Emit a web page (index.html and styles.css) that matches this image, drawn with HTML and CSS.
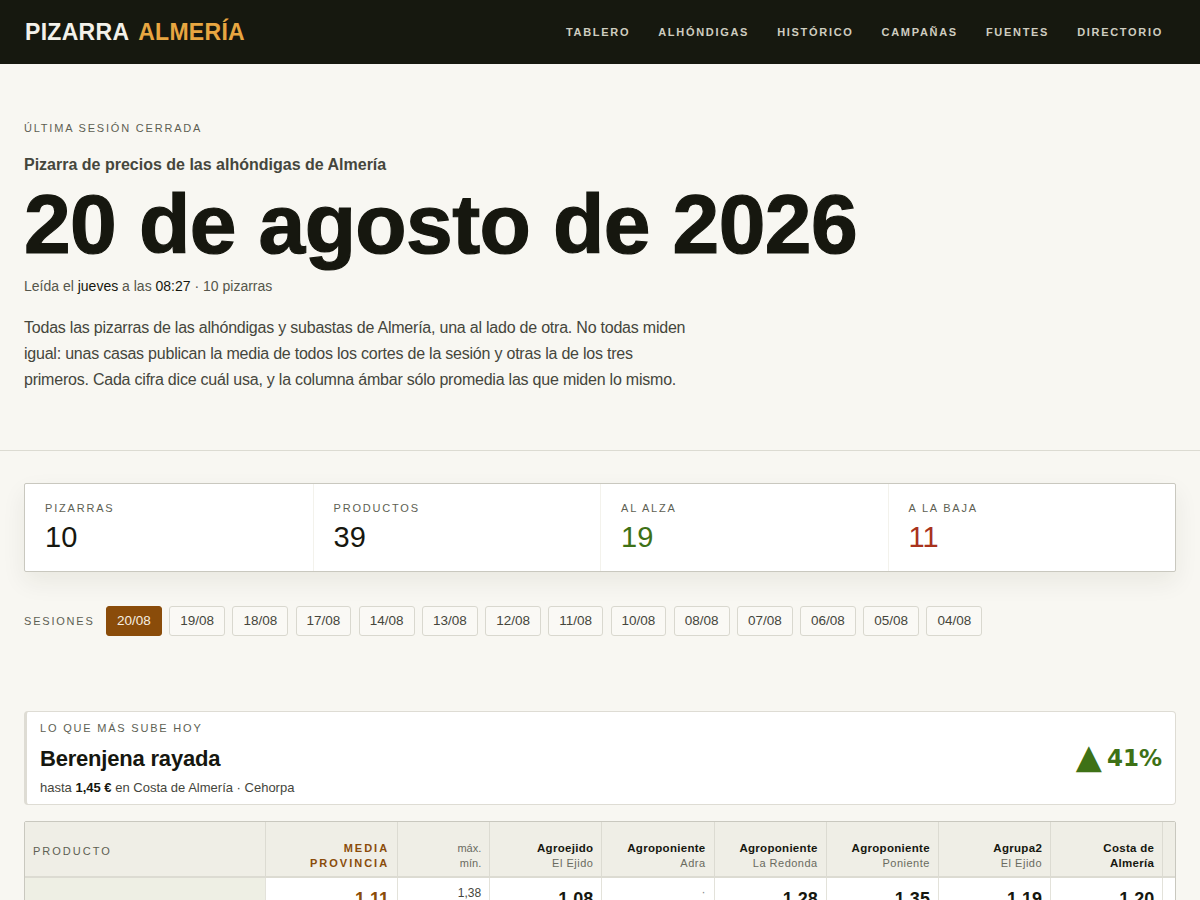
FILE: index.html
```html
<!DOCTYPE html>
<html lang="es">
<head>
    <meta charset="UTF-8">
    <meta name="viewport" content="width=device-width, initial-scale=1.0">
    <title>Pizarra Almería</title>
    <link rel="stylesheet" href="styles.css">
</head>
<body>
    <header class="topbar">
        <a class="logo" href="#">PIZARRA <span>ALMERÍA</span></a>
        <nav class="nav">
            <a href="#">Tablero</a>
            <a href="#">Alhóndigas</a>
            <a href="#">Histórico</a>
            <a href="#">Campañas</a>
            <a href="#">Fuentes</a>
            <a href="#">Directorio</a>
        </nav>
    </header>

    <section class="hero">
        <div class="eyebrow">Última sesión cerrada</div>
        <div class="kicker">Pizarra de precios de las alhóndigas de Almería</div>
        <h1>20 de agosto de 2026</h1>
        <div class="meta">Leída el <b>jueves</b> a las <b>08:27</b> · 10 pizarras</div>
        <p class="intro">Todas las pizarras de las alhóndigas y subastas de Almería, una al lado de otra. No todas miden igual: unas casas publican la media de todos los cortes de la sesión y otras la de los tres primeros. Cada cifra dice cuál usa, y la columna ámbar sólo promedia las que miden lo mismo.</p>
    </section>

    <main class="main">
        <div class="stats">
            <div class="stat">
                <div class="label">Pizarras</div>
                <div class="value">10</div>
            </div>
            <div class="stat">
                <div class="label">Productos</div>
                <div class="value">39</div>
            </div>
            <div class="stat">
                <div class="label">Al alza</div>
                <div class="value up">19</div>
            </div>
            <div class="stat">
                <div class="label">A la baja</div>
                <div class="value down">11</div>
            </div>
        </div>

        <div class="sessions">
            <span class="label">Sesiones</span>
            <a class="chip active" href="#">20/08</a>
            <a class="chip" href="#">19/08</a>
            <a class="chip" href="#">18/08</a>
            <a class="chip" href="#">17/08</a>
            <a class="chip" href="#">14/08</a>
            <a class="chip" href="#">13/08</a>
            <a class="chip" href="#">12/08</a>
            <a class="chip" href="#">11/08</a>
            <a class="chip" href="#">10/08</a>
            <a class="chip" href="#">08/08</a>
            <a class="chip" href="#">07/08</a>
            <a class="chip" href="#">06/08</a>
            <a class="chip" href="#">05/08</a>
            <a class="chip" href="#">04/08</a>
        </div>

        <div class="highlight">
            <div>
                <div class="label">Lo que más sube hoy</div>
                <div class="hl-name">Berenjena rayada</div>
                <div class="hl-sub">hasta <b>1,45 €</b> en Costa de Almería · Cehorpa</div>
            </div>
            <div class="hl-pct"><span class="tri">▲</span>41%</div>
        </div>

        <div class="table-wrap">
            <table class="board">
                <thead>
                    <tr>
                        <th class="c-prod">Producto</th>
                        <th class="c-media">Media<br>provincia</th>
                        <th class="c-range">máx.<br>mín.</th>
                        <th class="c-house"><b>Agroejido</b><small>El Ejido</small></th>
                        <th class="c-house"><b>Agroponiente</b><small>Adra</small></th>
                        <th class="c-house"><b>Agroponiente</b><small>La Redonda</small></th>
                        <th class="c-house"><b>Agroponiente</b><small>Poniente</small></th>
                        <th class="c-house"><b>Agrupa2</b><small>El Ejido</small></th>
                        <th class="c-house"><b>Costa de<br>Almería</b></th>
                        <th class="c-house"><b>Costa de</b><small>Cehorpa</small></th>
                    </tr>
                </thead>
                <tbody>
                    <tr>
                        <td class="c-prod">Berenjena larga</td>
                        <td class="c-media">1,11</td>
                        <td class="c-range">1,38<br>0,90</td>
                        <td>1,08</td>
                        <td class="empty">·</td>
                        <td>1,28</td>
                        <td>1,35</td>
                        <td>1,19</td>
                        <td>1,20</td>
                        <td>1,15</td>
                    </tr>
                    <tr>
                        <td class="c-prod">Berenjena rayada</td>
                        <td class="c-media">1,22</td>
                        <td class="c-range">1,45<br>1,02</td>
                        <td>1,10</td>
                        <td>1,05</td>
                        <td>1,18</td>
                        <td>1,25</td>
                        <td>1,14</td>
                        <td>1,45</td>
                        <td>1,38</td>
                    </tr>
                </tbody>
            </table>
        </div>
    </main>
</body>
</html>
```

FILE: styles.css
```css
body {
    font-family: 'Liberation Sans', Arial, sans-serif;
    margin: 0;
    background-color: #f8f7f2;
    color: #16170f;
}
a {
    color: inherit;
    text-decoration: none;
}
.topbar {
    height: 64px;
    background-color: #16180f;
    display: flex;
    align-items: center;
    justify-content: space-between;
    padding: 0 37px 0 25px;
}
.logo {
    font-weight: bold;
    font-size: 23px;
    letter-spacing: 0.3px;
    color: #f3f1ea;
}
.logo span {
    color: #e8a641;
    margin-left: 3px;
}
.nav {
    display: flex;
    gap: 28px;
}
.nav a {
    font-size: 11px;
    font-weight: bold;
    letter-spacing: 1.7px;
    text-transform: uppercase;
    color: #cfcdc0;
}
.hero {
    padding: 58px 24px 57px;
    border-bottom: 1px solid #dcdbd2;
}
.eyebrow, .label {
    font-size: 11px;
    letter-spacing: 1.8px;
    text-transform: uppercase;
    color: #5e5f53;
}
.kicker {
    margin-top: 22px;
    font-size: 16px;
    font-weight: bold;
    color: #45463c;
}
h1 {
    margin: 2px 0 0;
    font-size: 84px;
    font-weight: 900;
    letter-spacing: -0.6px;
    line-height: 96px;
    color: #16170f;
    -webkit-text-stroke: 1.2px #16170f;
}
.meta {
    margin-top: 6px;
    font-size: 14px;
    color: #55564b;
}
.meta b {
    font-weight: normal;
    color: #16170f;
}
.intro {
    margin: 21px 0 0;
    max-width: 672px;
    font-size: 16px;
    letter-spacing: -0.22px;
    line-height: 26px;
    color: #45463c;
}
.main {
    padding: 32px 24px 0;
}
.stats {
    display: grid;
    grid-template-columns: repeat(4, 1fr);
    background-color: white;
    border: 1px solid #c9c8bf;
    border-radius: 2px;
    box-shadow: 0 10px 24px rgba(40, 40, 20, 0.07);
}
.stat {
    padding: 18px 20px 17px;
    border-left: 1px solid #f3f2ec;
}
.stat:first-child {
    border-left: none;
}
.stat .value {
    margin-top: 6px;
    font-size: 29px;
    line-height: 34px;
    color: #16170f;
}
.value.up {
    color: #3e7116;
}
.value.down {
    color: #a8321c;
}
.sessions {
    display: flex;
    align-items: center;
    gap: 7.4px;
    margin-top: 34px;
}
.sessions .label {
    margin-right: 4px;
}
.chip {
    font-size: 13.5px;
    padding: 6px 10px 7px;
    border: 1px solid #d9d8cf;
    border-radius: 3px;
    color: #45463c;
    background-color: #faf9f5;
    line-height: 15px;
}
.chip.active {
    background-color: #8a4c0a;
    border-color: #8a4c0a;
    color: #f6efe2;
}
.highlight {
    margin-top: 75px;
    background-color: white;
    border: 1px solid #dedcd4;
    border-left: 3px solid #dedcd4;
    border-radius: 4px;
    padding: 10px 13px 9px 13px;
    display: flex;
    justify-content: space-between;
    align-items: center;
}
.hl-name {
    margin-top: 12px;
    font-size: 22px;
    font-weight: bold;
    letter-spacing: -0.2px;
}
.hl-sub {
    margin-top: 8px;
    font-size: 13px;
    color: #45463c;
}
.hl-sub b {
    color: #16170f;
}
.hl-pct {
    display: flex;
    align-items: center;
    font-family: 'DejaVu Sans', sans-serif;
    font-weight: bold;
    font-size: 23px;
    color: #3e7116;
    margin-top: -2px;
}
.hl-pct .tri {
    font-size: 34px;
    margin-right: 5px;
    margin-top: -3px;
}
.table-wrap {
    margin-top: 16px;
    border: 1px solid #c9c8bf;
    border-radius: 2px;
    overflow: hidden;
    background-color: white;
}
.board {
    border-collapse: collapse;
    table-layout: fixed;
    width: 1250px;
}
.board th {
    background-color: #efeee6;
    border-bottom: 2px solid #dcdbd2;
    border-left: 1px solid #dcdbd2;
    height: 55px;
    padding: 13px 8px 0;
    box-sizing: border-box;
    text-align: right;
    vertical-align: middle;
    font-weight: normal;
    font-size: 11px;
    line-height: 15px;
}
.board th:first-child {
    border-left: none;
}
.board th.c-prod {
    width: 240px;
    text-align: left;
    letter-spacing: 2px;
    text-transform: uppercase;
    color: #5e5f53;
    padding-top: 5px;
}
.board th.c-media {
    width: 132px;
    color: #8a4c0a;
    font-weight: bold;
    letter-spacing: 2px;
    text-transform: uppercase;
}
.board th.c-range {
    width: 92px;
    color: #6a6b60;
}
.board th.c-house {
    width: 112px;
    color: #6a6b60;
}
.board th b {
    display: block;
    color: #16170f;
    font-size: 11.5px;
    letter-spacing: 0.3px;
}
.board th small {
    display: block;
    font-size: 11px;
    letter-spacing: 0.5px;
}
.board td {
    border-left: 1px solid #e3e2da;
    border-bottom: 1px solid #e3e2da;
    padding: 11px 8px 8px;
    text-align: right;
    vertical-align: top;
    font-weight: bold;
    font-size: 18px;
    height: 48px;
}
.board td.c-prod {
    background-color: #eeefe4;
    text-align: left;
    vertical-align: bottom;
    border-left: none;
}
.board td.c-media {
    color: #8a4c0a;
}
.board td.c-range {
    padding-top: 8px;
    font-size: 12px;
    font-weight: normal;
    color: #45463c;
    line-height: 14px;
}
.board td.empty {
    font-weight: normal;
    font-size: 12px;
    padding-top: 7px;
    color: #888;
}
```
